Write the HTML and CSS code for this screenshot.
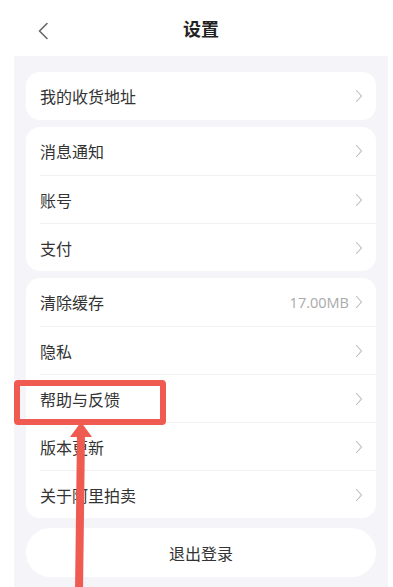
FILE: index.html
```html
<!DOCTYPE html>
<html lang="zh-CN">

<head>
    <meta charset="UTF-8">
    <meta name="viewport" content="width=device-width, initial-scale=1.0">
    <title>设置</title>
    <link rel="stylesheet" href="styles.css">
</head>

<body>
    <div class="screen">
        <div class="topbar">
            <svg class="back" width="12" height="18" viewBox="0 0 12 18">
                <path d="M10 1.5 L2.5 9 L10 16.5" fill="none" stroke="#666" stroke-width="1.6" stroke-linecap="round" stroke-linejoin="round"/>
            </svg>
            <h1 class="title">设置</h1>
        </div>

        <div class="panel">
            <div class="card">
                <div class="row"><span>我的收货地址</span><svg class="arrow" viewBox="0 0 8 14"><path d="M1.5 1.5 L6.5 7 L1.5 12.5"/></svg></div>
            </div>

            <div class="card">
                <div class="row"><span>消息通知</span><svg class="arrow" viewBox="0 0 8 14"><path d="M1.5 1.5 L6.5 7 L1.5 12.5"/></svg></div>
                <div class="row"><span>账号</span><svg class="arrow" viewBox="0 0 8 14"><path d="M1.5 1.5 L6.5 7 L1.5 12.5"/></svg></div>
                <div class="row"><span>支付</span><svg class="arrow" viewBox="0 0 8 14"><path d="M1.5 1.5 L6.5 7 L1.5 12.5"/></svg></div>
            </div>

            <div class="card">
                <div class="row"><span>清除缓存</span><em class="value">17.00MB</em><svg class="arrow" viewBox="0 0 8 14"><path d="M1.5 1.5 L6.5 7 L1.5 12.5"/></svg></div>
                <div class="row"><span>隐私</span><svg class="arrow" viewBox="0 0 8 14"><path d="M1.5 1.5 L6.5 7 L1.5 12.5"/></svg></div>
                <div class="row"><span>帮助与反馈</span><svg class="arrow" viewBox="0 0 8 14"><path d="M1.5 1.5 L6.5 7 L1.5 12.5"/></svg></div>
                <div class="row"><span>版本更新</span><svg class="arrow" viewBox="0 0 8 14"><path d="M1.5 1.5 L6.5 7 L1.5 12.5"/></svg></div>
                <div class="row"><span>关于阿里拍卖</span><svg class="arrow" viewBox="0 0 8 14"><path d="M1.5 1.5 L6.5 7 L1.5 12.5"/></svg></div>
            </div>

            <div class="logout">退出登录</div>
        </div>

        <!-- annotation over the screenshot -->
        <div class="mark-box"></div>
        <svg class="mark-arrow" width="30" height="170" viewBox="0 0 30 170">
            <path d="M15 0 L26 15 L4 15 Z" fill="#ef5b51"/>
            <path d="M15 12 L13 170" stroke="#ef5b51" stroke-width="8"/>
        </svg>
    </div>
</body>

</html>
```

FILE: styles.css
```css
body {
    margin: 0;
    padding: 0;
    font-family: "Noto Sans CJK SC", "Noto Sans", sans-serif;
    background-color: #fff;
    color: #333;
}

.screen {
    position: relative;
    width: 393px;
    height: 587px;
    overflow: hidden;
}

.topbar {
    height: 56px;
    margin: 0 5px 0 14px;
    display: flex;
    align-items: center;
    justify-content: center;
    position: relative;
}

.back {
    position: absolute;
    left: 23px;
    top: 22px;
}

.title {
    margin: 0;
    font-size: 18px;
    font-weight: bold;
    color: #222;
}

.panel {
    margin: 0 5px 0 14px;
    padding: 16px 12px 20px;
    background-color: #f5f5f9;
    display: flex;
    flex-direction: column;
    gap: 7px;
    min-height: 531px;
    box-sizing: border-box;
}

.card {
    background-color: #fff;
    border-radius: 14px;
    overflow: hidden;
}

.row {
    height: 48px;
    margin-left: 14px;
    padding-right: 13px;
    display: flex;
    align-items: center;
    font-size: 16px;
    border-top: 1px solid #f1f1f3;
    box-sizing: border-box;
}

.row:first-child {
    border-top: none;
}

.row span {
    flex: 1;
}

.value {
    font-style: normal;
    font-family: "Open Sans", sans-serif;
    font-size: 14.5px;
    color: #aaa;
    margin-right: 6px;
}

.arrow {
    width: 8px;
    height: 14px;
    fill: none;
    stroke: #b8b8b8;
    stroke-width: 1.1;
    stroke-linejoin: round;
    stroke-linecap: round;
}

.logout {
    margin-top: 3px;
    height: 49px;
    border-radius: 25px;
    background-color: #fff;
    display: flex;
    align-items: center;
    justify-content: center;
    font-size: 16px;
}

.mark-box {
    position: absolute;
    left: 14px;
    top: 380px;
    width: 152px;
    height: 45px;
    border: 6px solid #ef5b51;
    border-radius: 4px;
    box-sizing: border-box;
}

.mark-arrow {
    position: absolute;
    left: 66px;
    top: 422px;
}
```
